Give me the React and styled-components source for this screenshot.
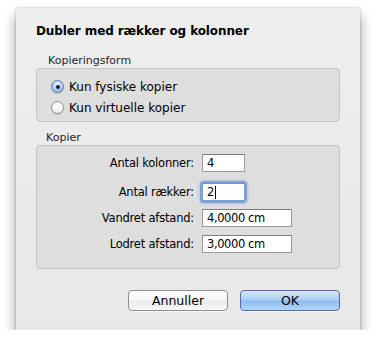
import React from 'react'
import styled, { createGlobalStyle } from 'styled-components';

const Global = createGlobalStyle`
  body {
    margin: 0;
    background: #fff;
    font-family: "Lucida Grande", "DejaVu Sans", sans-serif;
    color: #000;
  }
`;

const Window = styled.div`
  margin: 8px 0 0 16px;
  width: 344px;
  height: 322px;
  box-sizing: border-box;
  padding: 15px 20px 19px;
  background: linear-gradient(#eeeeee, #e8e8e8);
  box-shadow: 0 8px 12px rgba(0, 0, 0, 0.4), 0 0 2px rgba(0, 0, 0, 0.25);
  display: flex;
  flex-direction: column;
`;

const Title = styled.div`
  font-weight: bold;
  font-size: 12px;
  line-height: 16px;
  letter-spacing: -0.1px;
`;

const GroupLabel = styled.div`
  font-size: 11px;
  line-height: 14px;
  color: #262626;
  padding-left: ${p => p.$indent || 12}px;
  margin-top: ${p => p.$top}px;
`;

const Group = styled.div`
  background: #dedede;
  border: 1px solid #c4c4c4;
  border-radius: 4px;
  box-sizing: border-box;
  height: ${p => p.$height}px;
`;

const RadioList = styled.div`
  padding: 7px 0 0 14px;
  display: flex;
  flex-direction: column;
`;

const RadioRow = styled.label`
  display: flex;
  align-items: center;
  gap: 5px;
  height: 21px;
  font-size: 12px;
`;

const RadioDot = styled.span`
  width: 13px;
  height: 13px;
  border-radius: 50%;
  box-sizing: border-box;
  display: flex;
  align-items: center;
  justify-content: center;
  border: 1px solid ${p => (p.$on ? '#5b7bb0' : '#8d8d8d')};
  background: ${p => p.$on
    ? 'radial-gradient(circle at 50% 30%, #e6f0fd, #a9c7f0 60%, #8db4ea)'
    : 'linear-gradient(#ffffff, #ececec)'};
  box-shadow: 0 1px 1px rgba(0, 0, 0, 0.15);

  &::after {
    content: '';
    width: 4px;
    height: 4px;
    border-radius: 50%;
    background: #1a1a1a;
    display: ${p => (p.$on ? 'block' : 'none')};
  }
`;

const Form = styled.div`
  display: grid;
  grid-template-columns: 158px auto;
  column-gap: 7px;
  row-gap: 8px;
  padding-top: 8px;
  align-items: center;
`;

const FieldLabel = styled.div`
  text-align: right;
  font-size: 11.5px;
  letter-spacing: -0.2px;
  padding-right: 1px;
  margin-top: ${p => (p.$focused ? 3 : 0)}px;
`;

const Field = styled.div`
  width: ${p => p.$width}px;
  height: 18px;
  box-sizing: border-box;
  background: #fff;
  border: 1px solid ${p => (p.$focused ? '#7f9fd0' : '#9a9a9a')};
  border-top-color: ${p => (p.$focused ? '#6f90c6' : '#7d7d7d')};
  box-shadow: ${p => (p.$focused ? '0 0 0 2px rgba(108, 152, 220, 0.8), 0 0 3px 3px rgba(120, 160, 225, 0.4)' : 'none')};
  border-radius: ${p => (p.$focused ? 2 : 0)}px;
  margin-top: ${p => (p.$focused ? 3 : 0)}px;
  font-size: 11.5px;
  letter-spacing: -0.4px;
  line-height: 16px;
  padding-left: 4px;
  display: flex;
  align-items: center;
`;

const Caret = styled.span`
  width: 1px;
  height: 13px;
  background: #000;
  margin-left: 1px;
`;

const Buttons = styled.div`
  margin-top: auto;
  display: flex;
  justify-content: flex-end;
  gap: 12px;
`;

const Button = styled.div`
  width: 100px;
  height: 21px;
  box-sizing: border-box;
  border-radius: 4px;
  font-size: 12.5px;
  line-height: 19px;
  text-align: center;
  border: 1px solid ${p => (p.$primary ? '#5c6aa3' : '#8e8e8e')};
  background: ${p => p.$primary
    ? 'linear-gradient(#d6e7fc 0%, #aacdf7 45%, #8ebdf3 55%, #b4d5fa 100%)'
    : 'linear-gradient(#ffffff 0%, #f6f6f6 45%, #ececec 55%, #f6f6f6 100%)'};
  box-shadow: 0 1px 0 rgba(255, 255, 255, 0.6);
`;

const fields = [
  { label: 'Antal kolonner:', value: '4', width: 43 },
  { label: 'Antal rækker:', value: '2', width: 43, focused: true },
  { label: 'Vandret afstand:', value: '4,0000 cm', width: 90 },
  { label: 'Lodret afstand:', value: '3,0000 cm', width: 90 },
];

export default function App() {
  return (
    <>
      <Global />
      <Window>
        <Title>Dubler med rækker og kolonner</Title>

        <GroupLabel $top={15}>Kopieringsform</GroupLabel>
        <Group $height={54}>
          <RadioList>
            <RadioRow><RadioDot $on />Kun fysiske kopier</RadioRow>
            <RadioRow><RadioDot />Kun virtuelle kopier</RadioRow>
          </RadioList>
        </Group>

        <GroupLabel $top={9} $indent={10}>Kopier</GroupLabel>
        <Group $height={124}>
          <Form>
            {fields.map(f => (
              <React.Fragment key={f.label}>
                <FieldLabel $focused={f.focused}>{f.label}</FieldLabel>
                <Field $width={f.width} $focused={f.focused}>
                  {f.value}
                  {f.focused && <Caret />}
                </Field>
              </React.Fragment>
            ))}
          </Form>
        </Group>

        <Buttons>
          <Button>Annuller</Button>
          <Button $primary>OK</Button>
        </Buttons>
      </Window>
    </>
  )
}
